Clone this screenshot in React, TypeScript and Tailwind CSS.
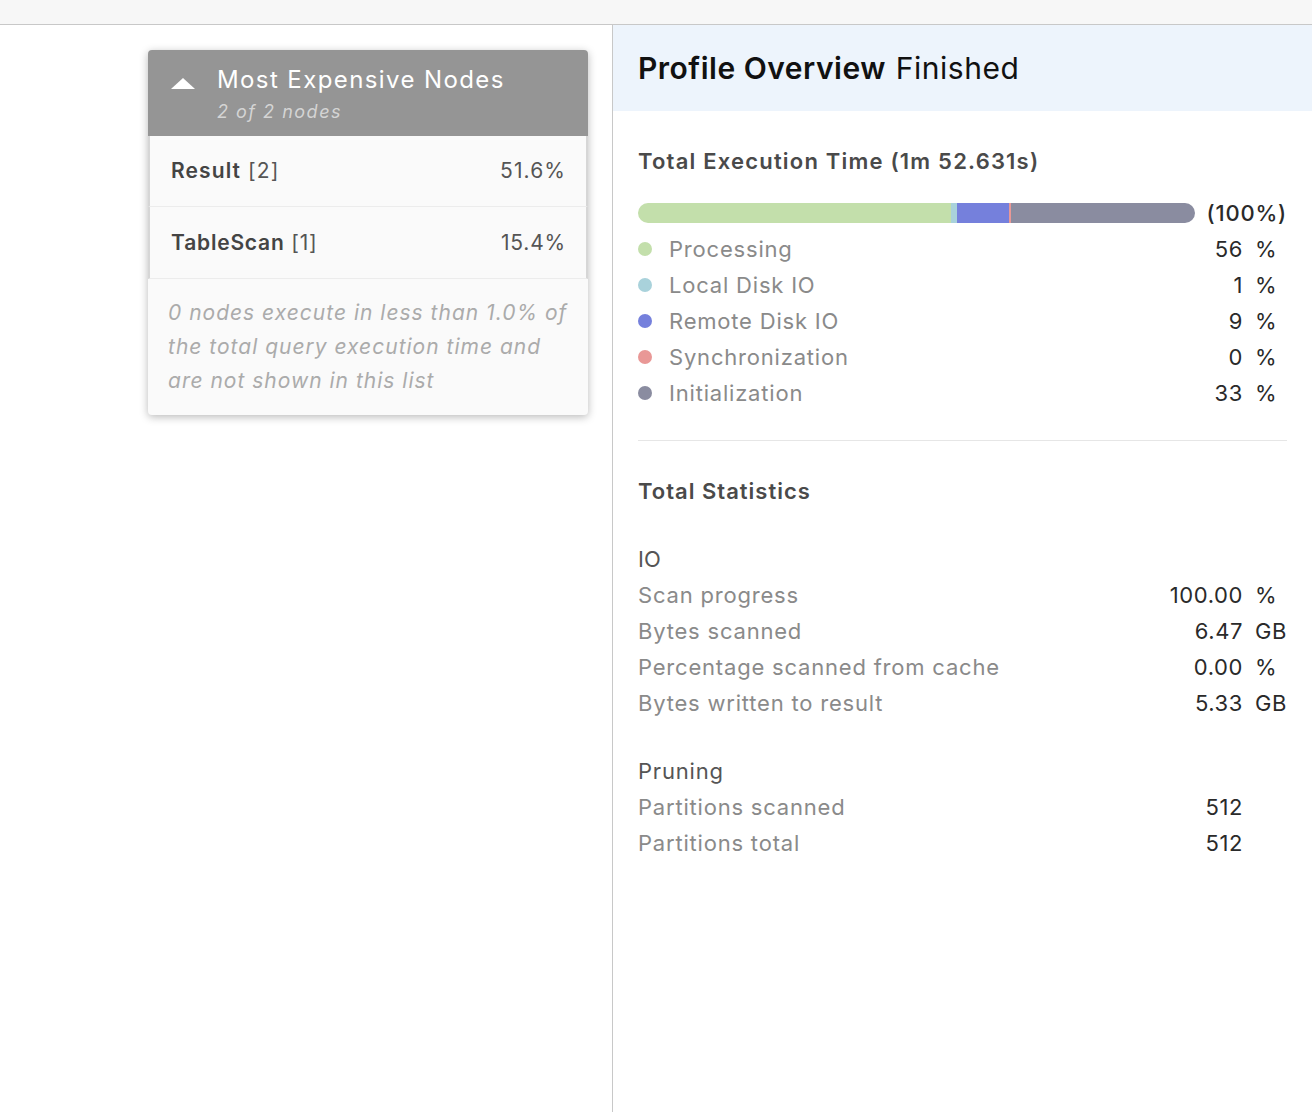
import React from "react";

const legend = [
  { label: "Processing", color: "bg-[#c3dfab]", value: "56" },
  { label: "Local Disk IO", color: "bg-[#a9d2db]", value: "1" },
  { label: "Remote Disk IO", color: "bg-[#7580dc]", value: "9" },
  { label: "Synchronization", color: "bg-[#e99896]", value: "0" },
  { label: "Initialization", color: "bg-[#8a8ca0]", value: "33" },
];

function Value({ num, unit }: { num: string; unit?: string }) {
  return (
    <div className="flex items-center tracking-[0.6px]">
      <span className="text-right text-[#2a2a2a]">{num}</span>
      <span className="ml-[12px] w-[32px] text-left text-[#2a2a2a]">{unit ?? ""}</span>
    </div>
  );
}

function StatRow({ label, num, unit }: { label: string; num: string; unit?: string }) {
  return (
    <div className="flex h-[36px] items-center justify-between">
      <span className="tracking-[0.8px] text-[#8a8a8a]">{label}</span>
      <Value num={num} unit={unit} />
    </div>
  );
}

export default function App() {
  return (
    <div
      className="flex h-[1112px] w-[1312px] flex-col overflow-hidden bg-white"
      style={{ fontFamily: "Inter, 'Noto Sans', sans-serif" }}
    >
      <div className="h-[25px] shrink-0 border-b border-[#c8c8c8] bg-[#f7f7f7]" />
      <div className="flex flex-1">
        {/* Left canvas */}
        <div className="w-[612px] shrink-0 pl-[148px] pt-[25px]">
          <div className="w-[440px] overflow-hidden rounded-[4px] bg-[#fafafa] shadow-[0_2px_8px_rgba(0,0,0,0.28)]">
            <div className="flex h-[86px] items-start bg-[#959595] pl-[23px] pt-[15px]">
              <svg width="24" height="11" viewBox="0 0 24 11" className="mr-[22px] mt-[13px]">
                <polygon points="12,0 24,11 0,11" fill="#ffffff" />
              </svg>
              <div className="flex flex-col">
                <span className="text-[24px] leading-[30px] tracking-[1.4px] text-white">Most Expensive Nodes</span>
                <span className="mt-[6px] text-[18px] leading-[22px] italic tracking-[1.5px] text-[#d4d4d4]">2 of 2 nodes</span>
              </div>
            </div>
            <div className="flex h-[71px] items-center justify-between border-x-2 border-b border-x-[#d6d6d6] border-b-[#ececec] pl-[21px] pr-[20px] text-[21px] tracking-[1.1px] text-[#555]">
              <span>
                <span className="font-semibold text-[#444]">Result</span> [2]
              </span>
              <span>51.6%</span>
            </div>
            <div className="flex h-[72px] items-center justify-between border-x-2 border-b border-x-[#d6d6d6] border-b-[#ececec] pl-[21px] pr-[20px] text-[21px] tracking-[0.8px] text-[#555]">
              <span>
                <span className="font-semibold text-[#444]">TableScan</span> [1]
              </span>
              <span>15.4%</span>
            </div>
            <div className="h-[136px] pl-[20px] pr-[10px] pt-[17px] text-[21px] leading-[34px] italic tracking-[1px] text-[#ababab]">
              0 nodes execute in less than 1.0% of the total query execution time and are not shown in this list
            </div>
          </div>
        </div>

        {/* Right panel */}
        <div className="flex flex-1 flex-col border-l border-[#c8c8c8]">
          <div className="flex h-[86px] items-center bg-[#edf4fc] px-[25px] text-[30px] tracking-[0.5px] text-[#111]">
            <span className="font-semibold">Profile Overview</span>
            <span className="ml-[10px]">Finished</span>
          </div>
          <div className="pl-[25px] pr-[25px] pt-[32px] text-[22px] leading-[36px]">
            <div className="font-semibold tracking-[1.2px] text-[#4a4a4a]">Total Execution Time (1m 52.631s)</div>
            <div className="mt-[16px] flex h-[36px] items-center">
              <div className="flex h-[20px] w-[557px] overflow-hidden rounded-full">
                <div className="w-[313px] bg-[#c3dfab]" />
                <div className="w-[6px] bg-[#a9d2db]" />
                <div className="w-[52px] bg-[#7580dc]" />
                <div className="w-[2px] bg-[#e99896]" />
                <div className="flex-1 bg-[#8a8ca0]" />
              </div>
              <span className="ml-auto font-medium tracking-[0.8px] text-[#2a2a2a]">(100%)</span>
            </div>
            {legend.map((l) => (
              <div key={l.label} className="flex h-[36px] items-center justify-between">
                <div className="flex items-center">
                  <span className={`h-[14px] w-[14px] rounded-full ${l.color}`} />
                  <span className="ml-[17px] tracking-[0.8px] text-[#8a8a8a]">{l.label}</span>
                </div>
                <Value num={l.value} unit="%" />
              </div>
            ))}
            <div className="mt-[29px] h-px bg-[#e6e6e6]" />
            <div className="mt-[32px] font-semibold tracking-[1px] text-[#4a4a4a]">Total Statistics</div>
            <div className="mt-[32px] text-[#555]">IO</div>
            <StatRow label="Scan progress" num="100.00" unit="%" />
            <StatRow label="Bytes scanned" num="6.47" unit="GB" />
            <StatRow label="Percentage scanned from cache" num="0.00" unit="%" />
            <StatRow label="Bytes written to result" num="5.33" unit="GB" />
            <div className="mt-[32px] tracking-[0.8px] text-[#555]">Pruning</div>
            <StatRow label="Partitions scanned" num="512" />
            <StatRow label="Partitions total" num="512" />
          </div>
        </div>
      </div>
    </div>
  );
}
